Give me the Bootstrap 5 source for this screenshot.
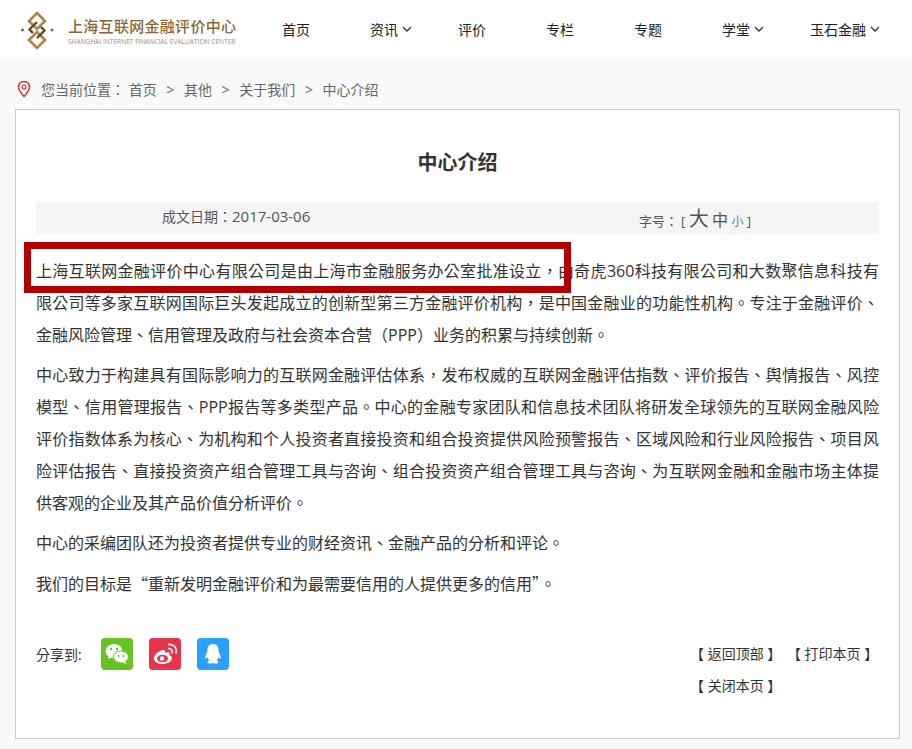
<!DOCTYPE html>
<html lang="zh-Hant">
<head>
    <meta charset="UTF-8">
    <title>中心介绍</title>
    <link href="https://cdn.jsdelivr.net/npm/bootstrap@5.3.3/dist/css/bootstrap.min.css" rel="stylesheet">
    <style>
        body, html {
            height: 749px;
            overflow: hidden;
        }
        body {
            background: #f9f9f9;
            font-family: "Open Sans", "Noto Sans CJK TC", sans-serif;
            font-size: 14px;
            color: #333;
        }
        .site-head {
            height: 59px;
            background: #fff;
            padding-left: 20px;
        }
        .logo-box {
            width: 232px;
            gap: 4px;
        }
        .logo-cn {
            font-size: 15px;
            line-height: 18px;
            font-weight: 500;
            color: #8a6538;
            letter-spacing: .02em;
            white-space: nowrap;
            margin-top: 3px;
        }
        .logo-en {
            font-size: 6.6px;
            line-height: 8px;
            margin-top: 3px;
            color: #a98b68;
            white-space: nowrap;
        }
        .nav-cell {
            width: 88px;
            padding-left: 30px;
            color: #222;
            white-space: nowrap;
        }
        .nav-arrow {
            margin-left: 4px;
            vertical-align: 2px;
        }
        .crumb-bar {
            height: 50px;
            padding: 10px 0 0 16px;
            color: #666;
            gap: 9px;
        }
        .crumb-sep {
            margin: 0 6px;
        }
        .doc-panel {
            position: relative;
            margin: 0 12px 0 15px;
            height: 630px;
            background: #fff;
            border: 1px solid #ccc;
            padding: 0 20px;
        }
        .doc-title {
            font-size: 20px;
            font-weight: 700;
            line-height: 28px;
            padding-top: 39px;
            margin: 0 0 25px;
            color: #333;
        }
        .info-strip {
            height: 32px;
            background: #f5f5f5;
            margin-bottom: 21px;
            color: #555;
        }
        .info-date {
            width: 150px;
            margin-left: 126px;
            white-space: nowrap;
            padding-bottom: 3px;
        }
        .info-digits {
            font-size: 15px;
        }
        .info-size {
            margin-left: 327px;
            white-space: nowrap;
            font-size: 13px;
            padding-top: 1px;
        }
        .size-bracket { margin-left: 3px; }
        .size-l { font-size: 20px; }
        .size-m { font-size: 16px; }
        .size-s { font-size: 12px; color: #4a7fc4; }
        .doc-body p {
            font-size: 16px;
            line-height: 32px;
            margin: 0 0 8px;
            text-align: justify;
            color: #333;
        }
        .wide-quote {
            font-family: "Noto Sans CJK TC", sans-serif;
        }
        .mark-box {
            position: absolute;
            left: 8px;
            top: 132px;
            width: 547px;
            height: 51px;
            border: 7px solid #b40000;
            pointer-events: none;
        }
        .share-row {
            margin-top: 38px;
        }
        .share-label {
            width: 65px;
            line-height: 34px;
        }
        .share-btn {
            width: 32px;
            height: 32px;
            border-radius: 4px;
            margin-right: 16px;
        }
        .bg-wx { background: #67c322; }
        .bg-wb { background: #e8334a; }
        .bg-qq { background: #2ba0ff; }
        .page-links {
            width: 192px;
            line-height: 32px;
        }
        .page-link-item {
            white-space: nowrap;
            margin-right: 2px;
        }
        .page-links-inner {
            transform: translateX(3px);
        }
    </style>
</head>
<body>
    <header class="site-head d-flex align-items-center">
        <div class="logo-box d-flex align-items-center">
            <svg width="44" height="44" viewBox="0 0 44 44" fill="none">
                <circle cx="2.500" cy="22" r="1.500" fill="#8a6538"/>
                <circle cx="32" cy="22" r="1.500" fill="#8a6538"/>
                <path d="M17 5 L25 13 L17 21 L9 13 Z" stroke="#ae8142" stroke-width="2.600"/>
                <path d="M17 24 L25 32 L17 40 L9 32 Z" stroke="#ae8142" stroke-width="2.600"/>
                <path d="M17 14 L9.500 21.500 L13 25 M17 30 L24.500 22.500 L21 19" stroke="#6b4517" stroke-width="2.400"/>
            </svg>
            <div>
                <div class="logo-cn">上海互联网金融评价中心</div>
                <div class="logo-en">SHANGHAI INTERNET FINANCIAL EVALUATION CENTER</div>
            </div>
        </div>
        <nav class="d-flex">
            <div class="nav-cell">首页</div>
            <div class="nav-cell">资讯<svg class="nav-arrow" width="10" height="7" viewBox="0 0 10 7"><path d="M1 1l4 4 4-4" fill="none" stroke="#333" stroke-width="1.300"/></svg></div>
            <div class="nav-cell">评价</div>
            <div class="nav-cell">专栏</div>
            <div class="nav-cell">专题</div>
            <div class="nav-cell">学堂<svg class="nav-arrow" width="10" height="7" viewBox="0 0 10 7"><path d="M1 1l4 4 4-4" fill="none" stroke="#333" stroke-width="1.300"/></svg></div>
            <div class="nav-cell">玉石金融<svg class="nav-arrow" width="10" height="7" viewBox="0 0 10 7"><path d="M1 1l4 4 4-4" fill="none" stroke="#333" stroke-width="1.300"/></svg></div>
        </nav>
    </header>

    <div class="crumb-bar d-flex align-items-center">
        <svg width="16" height="18" viewBox="0 0 16 18" fill="none">
            <path d="M8 16.500C5 13 2.500 10.500 2.500 7a5.500 5.500 0 0 1 11 0c0 3.500-2.500 6-5.500 9.500z" stroke="#e1242d" stroke-width="1.400"/>
            <circle cx="8" cy="7" r="2" stroke="#e1242d" stroke-width="1.200"/>
        </svg>
        <div>您当前位置： 首页 <span class="crumb-sep">&gt;</span> 其他 <span class="crumb-sep">&gt;</span> 关于我们 <span class="crumb-sep">&gt;</span> 中心介绍</div>
    </div>

    <main class="doc-panel">
        <h1 class="doc-title text-center">中心介绍</h1>
        <div class="info-strip d-flex align-items-center">
            <div class="info-date">成文日期：<span class="info-digits">2017-03-06</span></div>
            <div class="info-size">字号：<span class="size-bracket">[</span> <span class="size-l">大</span> <span class="size-m">中</span> <span class="size-s">小</span> ]</div>
        </div>
        <div class="doc-body">
            <p>上海互联网金融评价中心有限公司是由上海市金融服务办公室批准设立，由奇虎360科技有限公司和大数聚信息科技有限公司等多家互联网国际巨头发起成立的创新型第三方金融评价机构，是中国金融业的功能性机构。专注于金融评价、金融风险管理、信用管理及政府与社会资本合营（PPP）业务的积累与持续创新。</p>
            <p>中心致力于构建具有国际影响力的互联网金融评估体系，发布权威的互联网金融评估指数、评价报告、舆情报告、风控模型、信用管理报告、PPP报告等多类型产品。中心的金融专家团队和信息技术团队将研发全球领先的互联网金融风险评价指数体系为核心、为机构和个人投资者直接投资和组合投资提供风险预警报告、区域风险和行业风险报告、项目风险评估报告、直接投资资产组合管理工具与咨询、组合投资资产组合管理工具与咨询、为互联网金融和金融市场主体提供客观的企业及其产品价值分析评价。</p>
            <p>中心的采编团队还为投资者提供专业的财经资讯、金融产品的分析和评论。</p>
            <p>我们的目标是<span class="wide-quote">“</span>重新发明金融评价和为最需要信用的人提供更多的信用<span class="wide-quote">”</span>。</p>
        </div>
        <div class="share-row d-flex justify-content-between">
            <div class="d-flex align-items-start">
                <div class="share-label">分享到:</div>
                <div class="share-btn bg-wx d-flex align-items-center justify-content-center">
                    <svg width="24" height="22" viewBox="0 0 24 22" fill="#fff">
                        <ellipse cx="9" cy="8" rx="8.500" ry="7"/>
                        <path d="M4 12l-1 4 5-2z"/>
                        <ellipse cx="16" cy="14" rx="7.500" ry="6" stroke="#67c322"/>
                        <path d="M20 18l1.500 3-5-2z"/>
                        <circle cx="6" cy="6" r="1.200" fill="#67c322"/><circle cx="12" cy="6" r="1.200" fill="#67c322"/>
                        <circle cx="13.500" cy="13" r="1" fill="#67c322"/><circle cx="18.500" cy="13" r="1" fill="#67c322"/>
                    </svg>
                </div>
                <div class="share-btn bg-wb d-flex align-items-center justify-content-center">
                    <svg width="24" height="22" viewBox="0 0 24 22" fill="none">
                        <path d="M10 7C5 8 1 12 1 15.500 1 19 5 21 9.500 21 15 21 19 18 19 15c0-2-2-2.500-2.500-3 .5-2-.5-3-2.500-2.500-1 .3-1.500.5-1.500.5 0-2-1-3.500-2.500-3z" fill="#fff"/>
                        <ellipse cx="9.500" cy="15.500" rx="5.500" ry="3.800" fill="#e8334a"/>
                        <circle cx="9" cy="15.500" r="2.200" fill="#fff"/>
                        <path d="M15 5.500c3-.5 5 2 4 5M15 1.500c6-1 9.500 4 8 9" stroke="#fff" stroke-width="1.600"/>
                    </svg>
                </div>
                <div class="share-btn bg-qq d-flex align-items-center justify-content-center">
                    <svg width="20" height="22" viewBox="0 0 20 22" fill="#fff">
                        <path d="M10 1c-4 0-5.500 3-5.500 6 0 1-.2 1.500-.5 2.500C2.500 12 2 14 2.500 15.500 3 16 4 15 4.500 14c.3 1.500 1 2.500 2 3.300C5 18 4 18.800 5 20c1.500 1 4 .7 5-.3 1 1 3.500 1.300 5 .3 1-1.200 0-2-1.500-2.700 1-.8 1.700-1.800 2-3.300.5 1 1.500 2 2 1.500.5-1.500 0-3.500-1.500-6-.3-1-.5-1.500-.5-2.500 0-3-1.500-6-5.500-6z"/>
                    </svg>
                </div>
            </div>
            <div class="page-links">
                <div class="page-links-inner">
                    <span class="page-link-item">【 返回顶部 】</span>
                    <span class="page-link-item">【 打印本页 】</span>
                    <span class="page-link-item">【 关闭本页 】</span>
                </div>
            </div>
        </div>
        <div class="mark-box"></div>
    </main>
</body>
</html>
